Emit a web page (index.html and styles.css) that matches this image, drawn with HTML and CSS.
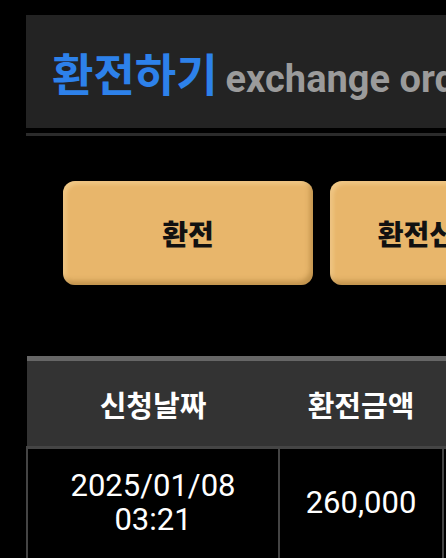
FILE: index.html
```html
<!DOCTYPE html>
<html lang="ko">

<head>
    <meta charset="UTF-8">
    <meta name="viewport" content="width=device-width, initial-scale=1.0">
    <title>환전하기</title>
    <link rel="stylesheet" href="styles.css">
</head>

<body>
    <div class="page">
        <div class="title-box">
            <h1><span class="title-ko">환전하기</span> <span class="title-en">exchange order</span></h1>
        </div>
        <div class="title-line"></div>

        <div class="tabs">
            <button class="tab-btn">환전</button>
            <button class="tab-btn">환전신청내역</button>
        </div>

        <table class="history">
            <thead>
                <tr>
                    <th class="col-date">신청날짜</th>
                    <th class="col-amount">환전금액</th>
                    <th>상태</th>
                </tr>
            </thead>
            <tbody>
                <tr>
                    <td>2025/01/08<br>03:21</td>
                    <td>260,000</td>
                    <td>완료</td>
                </tr>
            </tbody>
        </table>
    </div>
</body>

</html>
```

FILE: styles.css
```css
body {
    margin: 0;
    background-color: #000;
    color: #fff;
    font-family: Roboto, "Noto Sans CJK KR", sans-serif;
    overflow: hidden;
}

.page {
    width: 760px;
    margin-left: 26px;
    padding-top: 15px;
}

.title-box {
    background-color: #232323;
    height: 113px;
    display: flex;
    align-items: center;
    padding-left: 26px;
}

h1 {
    margin: 0;
    padding-top: 2px;
    white-space: nowrap;
}

.title-ko {
    font-family: "Noto Sans CJK KR", sans-serif;
    font-size: 45px;
    font-weight: 700;
    color: #2d81ea;
}

.title-en {
    font-family: Roboto, sans-serif;
    font-size: 38px;
    font-weight: 700;
    color: #9b9b9b;
}

.title-line {
    margin-top: 5px;
    height: 3px;
    background-color: #2b2b2b;
}

.tabs {
    display: flex;
    gap: 17px;
    padding-left: 37px;
    margin-top: 45px;
}

.tab-btn {
    width: 250px;
    height: 104px;
    flex-shrink: 0;
    border: none;
    border-radius: 12px;
    background-color: #e8b66b;
    box-shadow: inset -3px -4px 5px rgba(120, 80, 20, 0.35), inset 3px 3px 4px rgba(255, 230, 180, 0.4);
    font-family: "Noto Sans CJK KR", sans-serif;
    font-size: 28px;
    font-weight: 900;
    color: #111;
    white-space: nowrap;
}

.history {
    margin-top: 71px;
    width: 100%;
    border-collapse: collapse;
    border-top: 5px solid #666;
}

.history th {
    background-color: #333;
    height: 85px;
    padding: 0;
    font-family: "Noto Sans CJK KR", sans-serif;
    font-size: 29px;
    font-weight: 700;
    color: #fff;
    border-bottom: 3px solid #454545;
}

.col-date {
    width: 252px;
}

.col-amount {
    width: 164px;
}

.history td {
    text-align: center;
    font-size: 31px;
    line-height: 34px;
    padding: 20px 0 30px;
    border: 2px solid #444;
    border-top: none;
}
```
